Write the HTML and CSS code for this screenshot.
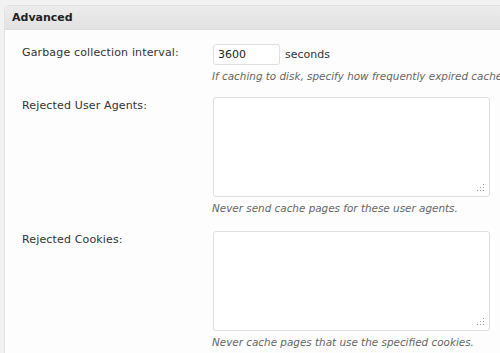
FILE: index.html
```html
<!DOCTYPE html>
<html lang="en">
<head>
    <meta charset="UTF-8">
    <title>Advanced</title>
    <link rel="stylesheet" href="styles.css">
</head>
<body>
    <div class="postbox">
        <h3 class="hndle">Advanced</h3>
        <div class="inside">
            <div class="field-row first">
                <label class="field-label">Garbage collection interval:</label>
                <div class="field">
                    <div class="inline">
                        <input type="text" class="small-text" value="3600">
                        <span class="unit">seconds</span>
                    </div>
                    <p class="description">If caching to disk, specify how frequently expired cache</p>
                </div>
            </div>
            <div class="field-row">
                <label class="field-label">Rejected User Agents:</label>
                <div class="field">
                    <div class="area-wrap">
                        <textarea></textarea>
                        <span class="grip"></span>
                    </div>
                    <p class="description">Never send cache pages for these user agents.</p>
                </div>
            </div>
            <div class="field-row last">
                <label class="field-label">Rejected Cookies:</label>
                <div class="field">
                    <div class="area-wrap">
                        <textarea></textarea>
                        <span class="grip"></span>
                    </div>
                    <p class="description">Never cache pages that use the specified cookies.</p>
                </div>
            </div>
        </div>
    </div>
</body>
</html>
```

FILE: styles.css
```css
body {
    margin: 0;
    padding: 5px 0 0 4px;
    background-color: #f2f2f2;
    font-family: "DejaVu Sans", Verdana, sans-serif;
    font-size: 11px;
    color: #333;
    overflow: hidden;
    height: 353px;
    box-sizing: border-box;
}
.postbox {
    width: 520px;
    height: 360px;
    background-color: #fdfdfd;
    border: 1px solid #e2e2e2;
    border-radius: 5px 0 0 0;
}
.hndle {
    margin: 0;
    height: 23px;
    line-height: 23px;
    padding: 0 7px;
    font-size: 11px;
    font-weight: bold;
    color: #222;
    background: linear-gradient(to bottom, #ececec, #e2e2e2);
    border-bottom: 1px solid #dcdcdc;
    border-radius: 5px 0 0 0;
}
.field-row {
    display: grid;
    grid-template-columns: 208px 290px;
    padding-top: 13px;
}
.field-row.first {
    padding-top: 14px;
}
.field-row.last {
    padding-top: 15px;
}
.field-label {
    padding: 1px 0 0 17px;
    line-height: 16px;
    letter-spacing: 0.15px;
}
.inline {
    display: flex;
    align-items: center;
    gap: 5px;
}
input.small-text {
    width: 67px;
    height: 21px;
    box-sizing: border-box;
    padding: 2px 4px;
    font-family: "DejaVu Sans", Verdana, sans-serif;
    font-size: 11px;
    color: #222;
    border: 1px solid #dfdfdf;
    border-radius: 3px;
    background-color: #fff;
    margin: 0;
}
.area-wrap {
    position: relative;
    width: 277px;
}
textarea {
    display: block;
    width: 277px;
    height: 100px;
    box-sizing: border-box;
    border: 1px solid #dfdfdf;
    border-radius: 3px;
    background-color: #fff;
    margin: 0;
    resize: none;
}
.grip {
    position: absolute;
    right: 5px;
    bottom: 5px;
    width: 9px;
    height: 9px;
    background:
        radial-gradient(circle, #999 0.8px, transparent 1px) 6px 0 / 3px 3px no-repeat,
        radial-gradient(circle, #999 0.8px, transparent 1px) 3px 3px / 3px 3px no-repeat,
        radial-gradient(circle, #999 0.8px, transparent 1px) 6px 3px / 3px 3px no-repeat,
        radial-gradient(circle, #999 0.8px, transparent 1px) 0 6px / 3px 3px no-repeat,
        radial-gradient(circle, #999 0.8px, transparent 1px) 3px 6px / 3px 3px no-repeat,
        radial-gradient(circle, #999 0.8px, transparent 1px) 6px 6px / 3px 3px no-repeat;
}
.description {
    margin: 3px 0 0 -1px;
    font-size: 10.4px;
    font-style: italic;
    color: #666;
    white-space: nowrap;
    line-height: 16px;
}
```
